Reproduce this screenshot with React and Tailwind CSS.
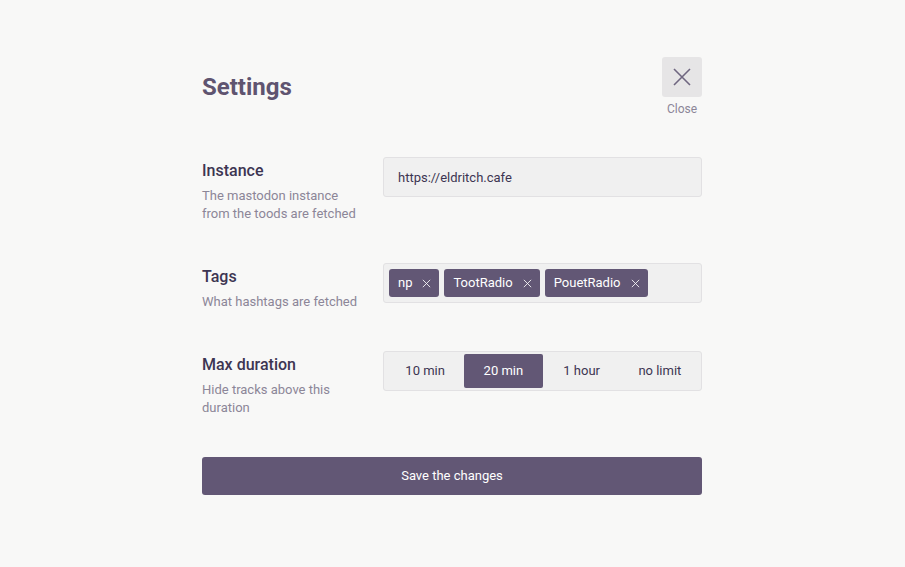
import { useState } from 'react';

const XIcon = ({ className, strokeWidth = 1.5 }) => (
  <svg viewBox="0 0 24 24" fill="none" stroke="currentColor" strokeWidth={strokeWidth} className={className}>
    <path d="M4 4L20 20M20 4L4 20" />
  </svg>
);

function Section({ title, description, children }) {
  return (
    <div className="flex items-start mt-[40px]">
      <div className="w-[181px] shrink-0">
        <div className="pt-px text-base leading-[26px] font-medium text-[#3d3552]">{title}</div>
        <div className="mt-[3px] text-[13px] leading-[18px] text-[#8c8698] pr-4">{description}</div>
      </div>
      <div className="flex-1">{children}</div>
    </div>
  );
}

export default function App() {
  const [tags, setTags] = useState(['np', 'TootRadio', 'PouetRadio']);
  const [duration, setDuration] = useState('20 min');
  const durations = ['10 min', '20 min', '1 hour', 'no limit'];

  return (
    <div className="min-h-screen bg-[#f8f8f7] font-['Roboto',sans-serif] pr-px">
      <div className="w-[500px] mx-auto pt-[57px]">
        {/* Header */}
        <div className="flex items-start justify-between">
          <h1 className="mt-[14px] text-2xl leading-8 font-bold text-[#5f5470]">Settings</h1>
          <div className="flex flex-col items-center">
            <button className="w-10 h-10 rounded-[3px] bg-[#e6e5e6] flex items-center justify-center text-[#6f6680]">
              <XIcon className="w-6 h-6" strokeWidth={1.6} />
            </button>
            <span className="mt-[4px] text-xs leading-4 text-[#8c8698]">Close</span>
          </div>
        </div>

        <Section title="Instance" description="The mastodon instance from the toods are fetched">
          <input
            defaultValue="https://eldritch.cafe"
            className="w-full h-10 px-[14px] rounded-[3px] border border-[#e2e1e3] bg-[#f0f0f0] text-[13px] text-[#3d3552] outline-none"
          />
        </Section>

        <Section title="Tags" description="What hashtags are fetched">
          <div className="h-10 rounded-[3px] border border-[#e2e1e3] bg-[#f0f0f0] p-[5px] flex items-center gap-[5px]">
            {tags.map((tag) => (
              <span
                key={tag}
                className="h-7 pl-[9px] pr-[7px] rounded-[3px] bg-[#625775] text-white text-[13px] flex items-center gap-[9px]"
              >
                {tag}
                <button onClick={() => setTags(tags.filter((t) => t !== tag))} className="text-white/90">
                  <XIcon className="w-[11px] h-[11px]" strokeWidth={2} />
                </button>
              </span>
            ))}
          </div>
        </Section>

        <Section title="Max duration" description="Hide tracks above this duration">
          <div className="h-10 rounded-[3px] border border-[#e2e1e3] bg-[#f0f0f0] p-[2px] flex">
            {durations.map((d) => (
              <button
                key={d}
                onClick={() => setDuration(d)}
                className={`flex-1 rounded-[2px] text-[13px] ${
                  duration === d ? 'bg-[#625775] text-white' : 'text-[#3d3552]'
                }`}
              >
                {d}
              </button>
            ))}
          </div>
        </Section>

        <button className="mt-[40px] w-full h-[38px] rounded-[3px] bg-[#625775] text-white text-[13px]">
          Save the changes
        </button>
      </div>
    </div>
  );
}
